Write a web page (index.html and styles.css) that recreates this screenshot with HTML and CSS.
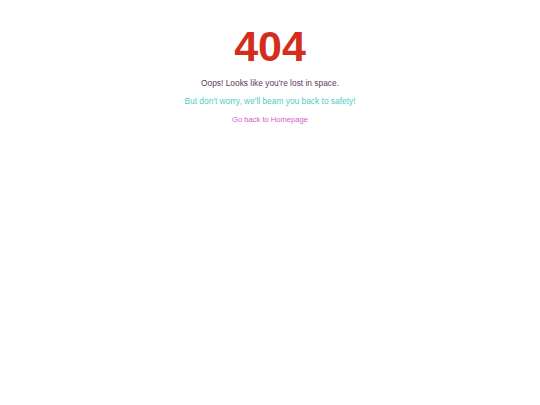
FILE: index.html
```html
<!DOCTYPE html>
<html>
<head>
<meta charset="utf-8">
<link rel="stylesheet" href="styles.css">
</head>
<body>
<div class="wrap">
  <h1 class="code">404</h1>
  <p class="msg">Oops! Looks like you're lost in space.</p>
  <p class="sub">But don't worry, we'll beam you back to safety!</p>
  <a class="home" href="#">Go back to Homepage</a>
</div>
</body>
</html>
```

FILE: styles.css
```css
body {
  margin: 0;
  background: #fff;
  font-family: "Liberation Sans", Arial, sans-serif;
}
.wrap {
  display: flex;
  flex-direction: column;
  align-items: center;
  padding-top: 21px;
}
.code {
  margin: 0;
  font-size: 43px;
  font-weight: bold;
  color: #d42d1e;
  line-height: 50px;
}
.msg {
  margin: 7px 0 0;
  font-size: 8.4px;
  color: #5a3a5e;
}
.sub {
  margin: 8.3px 0 0;
  font-size: 8.4px;
  color: #4ecdc4;
}
.home {
  margin-top: 9px;
  font-size: 7.6px;
  color: #d65bc4;
  text-decoration: none;
}
```
